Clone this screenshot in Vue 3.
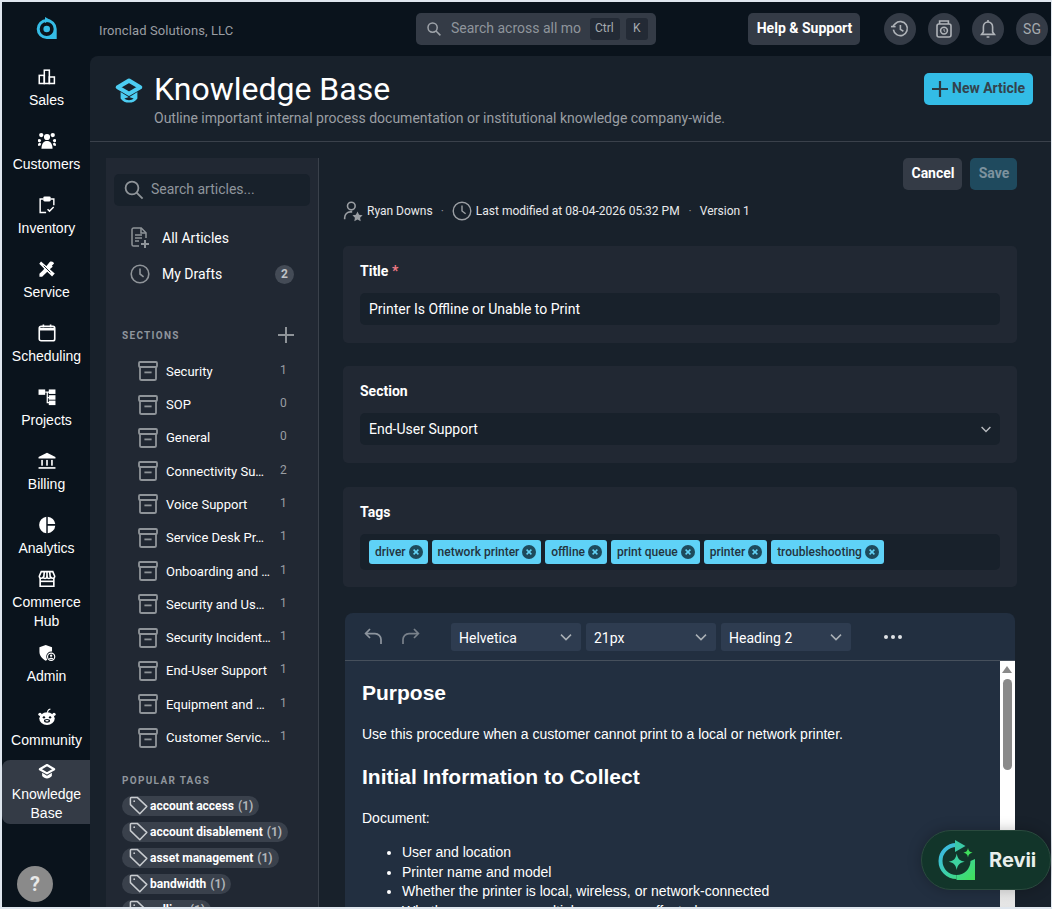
<script setup>
const nav = [
  { label: ['Sales'], icon: 'sales' },
  { label: ['Customers'], icon: 'customers' },
  { label: ['Inventory'], icon: 'inventory' },
  { label: ['Service'], icon: 'service' },
  { label: ['Scheduling'], icon: 'scheduling' },
  { label: ['Projects'], icon: 'projects' },
  { label: ['Billing'], icon: 'billing' },
  { label: ['Analytics'], icon: 'analytics' },
  { label: ['Commerce', 'Hub'], icon: 'commerce' },
  { label: ['Admin'], icon: 'admin' },
  { label: ['Community'], icon: 'community' },
  { label: ['Knowledge', 'Base'], icon: 'kb', active: true },
]
const sections = [
  ['Security', 1], ['SOP', 0], ['General', 0], ['Connectivity Su…', 2], ['Voice Support', 1],
  ['Service Desk Pr…', 1], ['Onboarding and …', 1], ['Security and Us…', 1],
  ['Security Incident…', 1], ['End-User Support', 1], ['Equipment and …', 1], ['Customer Servic…', 1],
]
const popular = [
  ['account access', 1], ['account disablement', 1], ['asset management', 1], ['bandwidth', 1], ['calling', 1],
]
const tags = ['driver', 'network printer', 'offline', 'print queue', 'printer', 'troubleshooting']
</script>

<template>
  <div class="frame">
    <aside class="rail">
      <div class="logo">
        <svg width="24" height="24" viewBox="0 0 24 24">
          <path fill-rule="evenodd" d="M12.7 2a10 10 0 1 0 0 20h10V12A10 10 0 0 0 12.7 2ZM12.7 5a7 7 0 1 1 0 14 7 7 0 0 1 0-14Z" fill="#35bce6"/>
          <circle cx="12.7" cy="12" r="3.3" fill="#35bce6"/>
          <path d="M11 0 16.4 3 11 6Z" fill="#35bce6"/>
        </svg>
      </div>
      <nav class="nav">
        <div v-for="n in nav" :key="n.icon" class="nav-item" :class="{ active: n.active }">
          <svg class="nav-icon" width="18" height="18" viewBox="0 0 20 20">
            <g v-if="n.icon === 'sales'" fill="none" stroke="#fff" stroke-width="1.7">
              <rect x="1.4" y="8.2" width="5.6" height="9"/><rect x="7" y="2.4" width="5.6" height="14.8"/><rect x="12.6" y="10" width="5.6" height="7.2"/>
            </g>
            <g v-else-if="n.icon === 'customers'" fill="#fff" transform="translate(10 10) scale(1.14) translate(-10 -10.4)">
              <circle cx="10" cy="6.5" r="3"/><circle cx="4.4" cy="4.6" r="2.1"/><circle cx="15.6" cy="4.6" r="2.1"/>
              <circle cx="2.6" cy="10" r="1.6"/><circle cx="17.4" cy="10" r="1.6"/>
              <path d="M4.6 18c0-5 2.2-7.6 5.4-7.6s5.4 2.6 5.4 7.6Z"/><path d="M1 15c0-1.6.8-3 2-3l1.4 1-1 2Z"/><path d="M19 15c0-1.6-.8-3-2-3l-1.4 1 1 2Z"/>
            </g>
            <g v-else-if="n.icon === 'inventory'" fill="none" stroke="#fff" stroke-width="1.6">
              <path d="M6 3.4H2.4v15H9M14 3.4h3.6v7"/><rect x="6.6" y="1.4" width="6.8" height="3.8" rx=".8" fill="#fff"/><path d="M10.6 14.6l2.2 2.2 4.6-4.6"/>
            </g>
            <g v-else-if="n.icon === 'service'" fill="#fff">
              <path d="M3.4 1.6 18.6 15l-3 3.4L1.4 4.2Z"/><path d="M13 2.2c2-1.2 4.4 0 4.8 1.8l-2.4 2.4 1 1-2.4 2-5.4 5.4L4.6 18.6H1.6v-3.2l4-4z"/>
              <path d="M6.2 6.2l7.6 7.6" stroke="#0a131c" stroke-width="1"/>
            </g>
            <g v-else-if="n.icon === 'scheduling'" fill="none" stroke="#fff" stroke-width="1.8">
              <rect x="1.4" y="2.6" width="17.2" height="16" rx="2"/><path d="M1.4 5.8h17.2" stroke-width="2.8"/><path d="M6 .6v3M14 .6v3"/>
            </g>
            <g v-else-if="n.icon === 'projects'" fill="#fff">
              <rect x="0.6" y="1.6" width="7.4" height="6"/><rect x="12" y="1.6" width="7.4" height="5"/><rect x="12" y="8" width="7.4" height="5"/><rect x="12" y="14" width="7.4" height="5"/>
              <path d="M8 4h5v1.4H8ZM9.6 4h1.4v12.8H9.6ZM9.6 10h3v1.4h-3ZM9.6 15.6h3v1.4h-3Z"/>
            </g>
            <g v-else-if="n.icon === 'billing'" fill="#fff">
              <path d="M10 .8 19.4 5.6V7.2H.6V5.6Z"/><rect x="3.6" y="8.8" width="1.8" height="6.4"/><rect x="9.1" y="8.8" width="1.8" height="6.4"/><rect x="14.6" y="8.8" width="1.8" height="6.4"/><rect x=".6" y="16.8" width="18.8" height="1.8"/>
            </g>
            <g v-else-if="n.icon === 'analytics'" fill="#fff">
              <path d="M9.2 .8a9.3 9.3 0 0 0 0 18.4Z"/><path d="M10.8 .8a9.3 9.3 0 0 1 8.4 8.2h-8.4Z"/><path d="M10.8 10.8h8.4a9.3 9.3 0 0 1-8.4 8.4Z"/>
            </g>
            <g v-else-if="n.icon === 'commerce'" fill="none" stroke="#fff" stroke-width="1.8">
              <path d="M2.4 9v9h15.2V9"/><path d="M3.6 1.8h12.8L18.6 7c0 2.4-2.8 3-4.3 1-1 2-3.4 2-4.3 0-1 2-3.4 2-4.3 0-1.5 2-4.3 1.4-4.3-1Z"/><path d="M7 2 6.4 8M10 2V8M13 2l.6 6"/><path d="M2.4 12.6h15.2"/>
            </g>
            <g v-else-if="n.icon === 'admin'" fill="#fff">
              <path d="M8.6 1 15.6 3.6v4.8a5.6 5.6 0 0 0-6 7.6l.8 1.6-1.8 1C4.6 16.4 1.6 13 1.6 8.6V3.6Z"/>
              <circle cx="14.6" cy="14.2" r="4" fill="none" stroke="#fff" stroke-width="1.3"/><circle cx="14.6" cy="13" r="1.3"/><path d="M12.2 16.6c.4-1.6 4.4-1.6 4.8 0Z"/>
            </g>
            <g v-else-if="n.icon === 'community'" fill="#fff">
              <ellipse cx="10" cy="11.8" rx="8.6" ry="7"/><circle cx="2.2" cy="7" r="1.8"/><circle cx="17.8" cy="7" r="1.8"/><path d="M10 5.2c0-2.4 1-4 3.6-4.6l.4 1c-2 .6-2.8 1.6-2.8 3.6Z"/>
              <circle cx="6.6" cy="10.4" r="1.3" fill="#0a131c"/><circle cx="13.4" cy="10.4" r="1.3" fill="#0a131c"/><ellipse cx="10" cy="14.2" rx="3.4" ry="2.1" fill="#0a131c"/><ellipse cx="10" cy="14.2" rx="1.9" ry=".9" fill="#fff"/>
            </g>
            <g v-else>
              <path d="M10 3.4 18 8 10 12.6 2 8Z" fill="none" stroke="#fff" stroke-width="2.4" stroke-linejoin="round"/>
              <path d="M4.6 12v3.6c2.8 3.6 8 3.6 10.8 0V12L10 15.2Z" fill="#fff"/>
            </g>
          </svg>
          <span v-for="l in n.label" :key="l" class="nav-label">{{ l }}</span>
        </div>
      </nav>
      <div class="help-dot">?</div>
    </aside>

    <div class="column">
      <header class="topbar">
        <span class="company">Ironclad Solutions, LLC</span>
        <div class="global-search">
          <svg width="16" height="16" viewBox="0 0 16 16" fill="none" stroke="#9ea3a9" stroke-width="1.5"><circle cx="6.6" cy="6.6" r="4.6"/><path d="M10 10l4.4 4.4"/></svg>
          <span class="gs-text">Search across all mo</span>
          <kbd class="key ctrl">Ctrl</kbd>
          <kbd class="key">K</kbd>
        </div>
        <button class="help-btn">Help &amp; Support</button>
        <div class="circles">
          <span class="circle">
            <svg width="20" height="20" viewBox="0 0 20 20" fill="none" stroke="#b0b4b9" stroke-width="1.6"><path d="M3.4 10.6A7 7 0 1 0 5.4 4.6L3 7"/><path d="M1 7.6h4.6" /><path d="M10.4 6v4.4l3 1.8"/></svg>
          </span>
          <span class="circle">
            <svg width="20" height="20" viewBox="0 0 20 20" fill="none" stroke="#b0b4b9" stroke-width="1.6"><rect x="3" y="5" width="14" height="13" rx="2"/><path d="M5.6 5V2h8.8v3"/><circle cx="10" cy="11.6" r="3.4"/><path d="M10 9.8v2l1.2.8" stroke-width="1"/></svg>
          </span>
          <span class="circle">
            <svg width="20" height="20" viewBox="0 0 20 20" fill="none" stroke="#b0b4b9" stroke-width="1.6"><path d="M10 3c-3 0-4.6 2.4-4.6 5v5L3.6 15.4h12.8L14.6 13V8c0-2.6-1.6-5-4.6-5Z"/><path d="M8.6 18h2.8M10 1v2"/></svg>
          </span>
          <span class="circle initials">SG</span>
        </div>
      </header>

      <main class="panel">
        <div class="page-head">
          <svg class="head-icon" width="30" height="26" viewBox="0 0 30 26">
            <path d="M15 2.6 26.2 9.2 15 15.8 3.8 9.2Z" fill="none" stroke="#4ccdf2" stroke-width="4.2" stroke-linejoin="round"/>
            <path d="M6.6 14v6.4c3.6 5.6 13.2 5.6 16.8 0V14L15 19.2Z" fill="#4ccdf2"/>
            <path d="M10.4 20.6c2.4 2.2 6.8 2.2 9.2 0l-4.6-1.6Z" fill="#18212b"/>
          </svg>
          <div class="head-text">
            <h1>Knowledge Base</h1>
            <p>Outline important internal process documentation or institutional knowledge company-wide.</p>
          </div>
          <button class="new-btn">
            <svg width="18" height="18" viewBox="0 0 18 18" stroke="#2b3a42" stroke-width="2.2"><path d="M9 1v16M1 9h16"/></svg>
            <span>New Article</span>
          </button>
        </div>

        <div class="body">
          <section class="side">
            <div class="side-search">
              <svg width="22" height="22" viewBox="0 0 22 22" fill="none" stroke="#8f9499" stroke-width="1.8"><circle cx="9" cy="9" r="6.4"/><path d="M13.6 13.6l6 6"/></svg>
              <span>Search articles...</span>
            </div>
            <div class="side-link">
              <svg width="20" height="22" viewBox="0 0 20 22" fill="none" stroke="#8f9499" stroke-width="1.5"><path d="M9 19H3.6A1.6 1.6 0 0 1 2 17.4V2.6A1.6 1.6 0 0 1 3.6 1h7.6L16 5.8V11"/><path d="M11 1v5h5"/><path d="M5 8h7M5 11h7M5 14h4"/><path d="M15 13v8M11 17h8" stroke-width="2"/></svg>
              <span class="sl-text">All Articles</span>
            </div>
            <div class="side-link">
              <svg width="20" height="20" viewBox="0 0 20 20" fill="none" stroke="#8f9499" stroke-width="1.6"><circle cx="10" cy="10" r="8.8"/><path d="M10 4.6V10l3.6 2.8"/></svg>
              <span class="sl-text">My Drafts</span>
              <span class="badge">2</span>
            </div>
            <div class="sec-head">
              <span>SECTIONS</span>
              <svg width="18" height="18" viewBox="0 0 18 18" stroke="#8f9499" stroke-width="2"><path d="M9 1v16M1 9h16"/></svg>
            </div>
            <ul class="sections">
              <li v-for="s in sections" :key="s[0]">
                <svg width="20" height="20" viewBox="0 0 20 20" fill="none" stroke="#8f9499" stroke-width="1.8"><rect x="1" y="1" width="18" height="5" rx="1"/><path d="M2 6v11.4A1.6 1.6 0 0 0 3.6 19h12.8a1.6 1.6 0 0 0 1.6-1.6V6"/><path d="M6.4 11.4h7.2"/></svg>
                <span class="sec-name">{{ s[0] }}</span>
                <span class="sec-count">{{ s[1] }}</span>
              </li>
            </ul>
            <div class="pop-head">POPULAR TAGS</div>
            <div class="pops">
              <span v-for="p in popular" :key="p[0]" class="pop">
                <svg width="19" height="19" viewBox="0 0 19 19" fill="none" stroke="#c8cbcf" stroke-width="1.5"><path d="M1.4 2.4a1 1 0 0 1 1-1h5.8l9.6 9-7 7.4L1.4 8.6Z" stroke-linejoin="round"/><circle cx="5.2" cy="5.2" r=".9" fill="#c8cbcf" stroke="none"/></svg>
                <b>{{ p[0] }}</b><em>({{ p[1] }})</em>
              </span>
            </div>
          </section>

          <section class="form">
            <div class="actions">
              <button class="btn-cancel">Cancel</button>
              <button class="btn-save">Save</button>
            </div>
            <div class="meta">
              <svg class="m-user" width="20" height="22" viewBox="0 0 24 26" fill="none" stroke="#9a9ea3" stroke-width="1.9"><circle cx="10" cy="7" r="4.6"/><path d="M2 23v-2a7 7 0 0 1 7-7h2"/><path d="M17.4 13.6l1.9 3.8 4.2.6-3 3 .7 4.2-3.8-2-3.8 2 .7-4.2-3-3 4.2-.6Z" fill="#9a9ea3" stroke="none"/></svg>
              <span>Ryan Downs</span>
              <i>·</i>
              <svg class="m-clock" width="20" height="20" viewBox="0 0 20 20" fill="none" stroke="#9a9ea3" stroke-width="1.4"><circle cx="10" cy="10" r="8.8"/><path d="M10 4.6V10l3.6 2.8"/></svg>
              <span>Last modified at 08-04-2026 05:32 PM</span>
              <i>·</i>
              <span>Version 1</span>
            </div>
            <div class="card">
              <label>Title <span class="req">*</span></label>
              <div class="field">Printer Is Offline or Unable to Print</div>
            </div>
            <div class="card">
              <label>Section</label>
              <div class="field select">
                End-User Support
                <svg width="12" height="12" viewBox="0 0 12 12" fill="none" stroke="#b8bbbf" stroke-width="1.4"><path d="M1.6 4l4.4 4.4L10.4 4"/></svg>
              </div>
            </div>
            <div class="card tags-card">
              <label>Tags</label>
              <div class="field tags">
                <span v-for="t in tags" :key="t" class="tag">
                  {{ t }}
                  <svg width="14" height="14" viewBox="0 0 14 14"><circle cx="7" cy="7" r="7" fill="#1e4a5c"/><path d="M4.6 4.6l4.8 4.8M9.4 4.6l-4.8 4.8" stroke="#63d3f6" stroke-width="1.5"/></svg>
                </span>
              </div>
            </div>
            <div class="editor">
              <div class="toolbar">
                <svg class="undo" width="22" height="22" viewBox="0 0 22 22" fill="none" stroke="#8d959e" stroke-width="1.7"><path d="M7 3 2.6 7.6 7 12"/><path d="M3 7.6h9a6 6 0 0 1 6 6V18"/></svg>
                <svg class="redo" width="22" height="22" viewBox="0 0 22 22" fill="none" stroke="#79818a" stroke-width="1.7"><path d="M15 3l4.4 4.6L15 12"/><path d="M19 7.6h-9a6 6 0 0 0-6 6V18"/></svg>
                <div class="tb-select first">Helvetica<svg width="14" height="14" viewBox="0 0 14 14" fill="none" stroke="#aab0b6" stroke-width="1.5"><path d="M2 4.6l5 5 5-5"/></svg></div>
                <div class="tb-select">21px<svg width="14" height="14" viewBox="0 0 14 14" fill="none" stroke="#aab0b6" stroke-width="1.5"><path d="M2 4.6l5 5 5-5"/></svg></div>
                <div class="tb-select">Heading 2<svg width="14" height="14" viewBox="0 0 14 14" fill="none" stroke="#aab0b6" stroke-width="1.5"><path d="M2 4.6l5 5 5-5"/></svg></div>
                <div class="dots"><i></i><i></i><i></i></div>
              </div>
              <div class="ed-wrap">
                <div class="ed-body">
                  <h2>Purpose</h2>
                  <p class="intro">Use this procedure when a customer cannot print to a local or network printer.</p>
                  <h2>Initial Information to Collect</h2>
                  <p class="lead">Document:</p>
                  <ul>
                    <li>User and location</li>
                    <li>Printer name and model</li>
                    <li>Whether the printer is local, wireless, or network-connected</li>
                    <li>Whether one user or multiple users are affected</li>
                  </ul>
                </div>
                <div class="scrollbar">
                  <span class="arrow"></span>
                  <span class="thumb"></span>
                </div>
              </div>
            </div>
          </section>
        </div>
      </main>
    </div>

    <div class="revii">
      <svg width="40" height="42" viewBox="0 0 40 42">
        <defs>
          <linearGradient id="rg" gradientUnits="userSpaceOnUse" x1="3" y1="8" x2="36" y2="40"><stop offset="0" stop-color="#3cb6ea"/><stop offset=".55" stop-color="#3dd3a0"/><stop offset="1" stop-color="#40e05c"/></linearGradient>
        </defs>
        <path d="M19.5 6A16 16 0 1 0 19.5 38" fill="none" stroke="url(#rg)" stroke-width="4"/>
        <path d="M38 20V41H19.5V36A14 14 0 0 0 33.5 22Z" fill="url(#rg)"/>
        <path d="M18 1 28.5 7 18 13Z" fill="#3bc9a6"/>
        <path d="M19.7 14.4c.9 5 2.6 7.3 8 8.3-5.4 1-7.1 3.3-8 8.3-.9-5-2.6-7.3-8-8.3 5.4-1 7.1-3.3 8-8.3Z" fill="#3dd3a0"/>
        <path d="M31 9c.5 2.9 1.5 4.1 4.6 4.7-3.1.6-4.1 1.8-4.6 4.7-.5-2.9-1.5-4.1-4.6-4.7 3.1-.6 4.1-1.8 4.6-4.7Z" fill="#40e05c"/>
      </svg>
      <span>Revii</span>
    </div>
  </div>
</template>

<style>
html, body { margin: 0; background: #dfe6ee; overflow: hidden; }
</style>

<style scoped>
* { box-sizing: border-box; }
.frame {
  position: relative;
  display: flex;
  width: 1052px;
  height: 909px;
  padding: 2px 1px 2px 2px;
  font-family: Roboto, sans-serif;
  color: #fff;
  overflow: hidden;
}
.rail {
  position: relative;
  width: 88px;
  flex: none;
  background: #0a131c;
  display: flex;
  flex-direction: column;
}
.logo { height: 54px; flex: none; display: flex; align-items: center; justify-content: center; }
.nav { display: flex; flex-direction: column; }
.nav-item {
  height: 64px;
  display: flex;
  flex-direction: column;
  align-items: center;
  justify-content: center;
  font-family: "Liberation Sans", Arial, sans-serif;
  font-size: 14px;
  line-height: 19px;
  border-radius: 8px 0 0 8px;
  padding-left: 1px;
}
.nav-item.active { background: #343b46; }
.nav-icon { margin: 1px 0 5px; flex: none; }
.nav-label { display: block; }
.help-dot {
  position: absolute;
  left: 15px;
  bottom: 5px;
  width: 36px;
  height: 36px;
  border-radius: 50%;
  background: #8a8a8a;
  display: flex;
  align-items: center;
  justify-content: center;
  font-weight: 700;
  font-size: 20px;
  color: #e8e8e8;
}
.column { flex: 1; min-width: 0; display: flex; flex-direction: column; background: #0a131c; overflow: hidden; }
.topbar { height: 54px; flex: none; display: flex; align-items: center; padding: 0 0 0 9px; }
.company { font-size: 13px; color: #9a9ea3; width: 317px; letter-spacing: .1px; padding-top: 3px; }
.global-search {
  width: 240px;
  height: 32px;
  border-radius: 5px;
  background: #343b46;
  display: flex;
  align-items: center;
  padding: 0 6px 0 10px;
  color: #8f959c;
  font-size: 14px;
}
.gs-text { margin: 0 0 2px 9px; width: 130px; white-space: nowrap; overflow: hidden; }
.key {
  font-family: Roboto, sans-serif;
  font-size: 12px;
  background: #232a35;
  color: #a6abb0;
  height: 22px;
  line-height: 20px;
  padding: 0 7px;
  border-radius: 3px;
  margin-left: 6px;
}
.key.ctrl { margin-left: 9px; width: 30px; padding: 0 5px; }
.help-btn {
  margin-left: 92px;
  width: 112px;
  height: 32px;
  border: 0;
  border-radius: 5px;
  background: #343b46;
  color: #fff;
  font: 700 14px Roboto, sans-serif;
  padding: 0 0 3px 1px;
}
.circles { display: flex; gap: 12px; margin-left: 24px; }
.circle {
  width: 32px;
  height: 32px;
  border-radius: 50%;
  background: #343b46;
  display: flex;
  align-items: center;
  justify-content: center;
}
.initials { font-size: 14px; color: #a5a9ae; }
.panel {
  flex: 1;
  min-height: 0;
  background: #18212b;
  border-radius: 8px 0 0 0;
  display: flex;
  flex-direction: column;
  overflow: hidden;
}
.page-head {
  height: 86px;
  flex: none;
  border-bottom: 1px solid #3a414b;
  display: flex;
  padding: 17px 18px 0 24px;
  position: relative;
}
.head-icon { margin-top: 5px; }
.head-text { margin-left: 10px; flex: 1; }
h1 { margin: 0; font-weight: 400; font-size: 32px; line-height: 32px; color: #fff; }
.head-text p { margin: 5px 0 0; font-size: 14px; line-height: 17px; color: #9a9ea3; }
.new-btn {
  width: 109px;
  height: 32px;
  border: 0;
  border-radius: 5px;
  background: #33bce6;
  color: #33434d;
  font: 700 14px Roboto, sans-serif;
  display: flex;
  align-items: center;
  padding: 0 0 0 7px;
  gap: 3px;
}
.new-btn span { margin-bottom: 2px; }
.body { flex: 1; min-height: 0; display: flex; padding: 16px 0 0 16px; }
.side {
  width: 213px;
  flex: none;
  background: #212833;
  border-right: 1px solid #3a414b;
  padding: 16px 8px 0 8px;
  overflow: hidden;
}
.side-search {
  height: 32px;
  border-radius: 5px;
  background: #18212b;
  display: flex;
  align-items: center;
  padding-left: 9px;
  font-size: 14px;
  color: #8f959c;
  gap: 6px;
}
.side-search span { margin-bottom: 2px; }
.side-link {
  height: 36px;
  display: flex;
  align-items: center;
  padding-left: 16px;
  font-size: 14px;
  font-weight: 400;
}
.side-search + .side-link { margin-top: 14px; }
.sl-text { margin-left: 12px; flex: 1; }
.badge {
  width: 19px;
  height: 19px;
  border-radius: 50%;
  background: #444b56;
  color: #c0c3c7;
  font-size: 12px;
  display: flex;
  align-items: center;
  justify-content: center;
  margin-right: 16px;
  font-weight: 700;
}
.sec-head {
  display: flex;
  justify-content: space-between;
  align-items: center;
  margin-top: 32px;
  height: 22px;
  padding: 0 15px 0 8px;
  font-size: 10px;
  font-weight: 700;
  letter-spacing: 1.3px;
  color: #8f959c;
}
.sections { list-style: none; margin: 8.6px 0 0; padding: 0; }
.sections li {
  height: 33.3px;
  display: flex;
  align-items: center;
  padding-left: 24px;
  font-size: 13px;
}
.sec-name { margin-left: 8px; width: 106px; white-space: nowrap; }
.sec-count { margin-left: 8px; font-size: 12px; color: #9a9ea3; margin-top: -3px; }
.pop-head {
  margin: 20.4px 0 0 8px;
  font-size: 10px;
  font-weight: 700;
  letter-spacing: 1.3px;
  color: #8f959c;
}
.pops { display: flex; flex-direction: column; align-items: flex-start; gap: 6px; margin: 10px 0 0 8px; }
.pop {
  height: 20px;
  border-radius: 10px;
  background: #3a414c;
  display: flex;
  align-items: center;
  padding: 0 6px 0 7px;
  font-size: 12px;
}
.pop b { font-weight: 700; margin-left: 2px; }
.pop em { font-style: normal; font-weight: 700; color: #b0b4b9; margin-left: 4px; }
.form { flex: 1; min-width: 0; padding: 0 34px 0 24px; }
.actions { display: flex; justify-content: flex-end; gap: 8px; height: 32px; }
.actions button { height: 32px; border: 0; border-radius: 5px; font: 700 14px Roboto, sans-serif; padding: 0 0 2px 1px; }
.btn-cancel { width: 59px; background: #343b46; color: #fff; }
.btn-save { width: 47px; background: #1f4a5e; color: #7d929e; }
.meta {
  display: flex;
  align-items: center;
  height: 24px;
  margin-top: 9px;
  font-size: 12px;
  color: #e8eaec;
}
.meta span { white-space: nowrap; }
.m-user { margin-right: 4px; }
.m-clock { margin-right: 4px; }
.meta i { font-style: normal; color: #8d9197; margin: 0 8px; }
.meta i:nth-of-type(2) { margin-left: 9px; }
.card {
  background: #212833;
  border-radius: 5px;
  padding: 16px 17px 0;
  height: 97px;
  margin-top: 23px;
}
.tags-card { height: 100px; margin-top: 24px; }
.card label { display: block; font-size: 14px; font-weight: 700; line-height: 18px; }
.req { color: #f07a84; }
.field {
  margin-top: 13px;
  height: 32px;
  border-radius: 5px;
  background: #18212b;
  display: flex;
  align-items: center;
  padding: 0 9px;
  font-size: 14px;
}
.select { justify-content: space-between; padding-right: 8px; }
.tags { height: 36px; gap: 4px; padding: 0 9px; }
.tag {
  height: 24px;
  border-radius: 3px;
  background: #5fd2f7;
  color: #23343e;
  font-size: 12px;
  font-weight: 500;
  display: flex;
  align-items: center;
  gap: 3px;
  padding: 0 5px 0 6px;
  white-space: nowrap;
}
.editor {
  margin: 26px 2px 0;
  border-radius: 8px 8px 0 0;
  background: #222f40;
  height: 330px;
}
.toolbar {
  height: 48px;
  border-bottom: 1px solid #46505c;
  display: flex;
  align-items: center;
  padding: 0 0 0 18px;
}
.redo { margin-left: 14px; }
.tb-select {
  width: 130px;
  height: 28px;
  border-radius: 3px;
  background: #2e3c50;
  margin-left: 5px;
  padding: 2px 8px 0;
  display: flex;
  align-items: center;
  justify-content: space-between;
  font-size: 14px;
}
.tb-select svg { margin-bottom: 2px; }
.tb-select.first { margin-left: 30px; }
.dots { display: flex; gap: 3px; margin-left: 33px; }
.dots i { width: 4px; height: 4px; border-radius: 50%; background: #dfe2e5; }
.ed-wrap { display: flex; height: 282px; background: #222f40; }
.ed-body {
  flex: 1;
  padding: 19px 17px 0;
  font-family: "Liberation Sans", Arial, sans-serif;
  font-size: 14px;
  line-height: 19.6px;
}
.ed-body h2 { font-size: 21px; font-weight: 700; line-height: 25px; margin: 0; }
.intro { margin: 20px 0 19px; }
.lead { margin: 20px 0 15px; }
.ed-body ul { margin: 0; padding-left: 40px; }
.scrollbar {
  width: 15px;
  background: linear-gradient(#fff 60%, #d8d8d8);
  position: relative;
  flex: none;
}
.arrow {
  position: absolute;
  left: 2px;
  top: 5px;
  border: 5.5px solid transparent;
  border-top: 0;
  border-bottom: 7px solid #8a8a8a;
}
.thumb {
  position: absolute;
  left: 3px;
  top: 18px;
  width: 9px;
  height: 91px;
  border-radius: 5px;
  background: #8a8a8a;
}
.revii {
  position: absolute;
  left: 921px;
  top: 830px;
  width: 130px;
  height: 60px;
  border-radius: 30px;
  background: #12352a;
  border: 1px solid #2a4a3e;
  display: flex;
  align-items: center;
  padding-left: 15px;
  gap: 12px;
  font: 700 20px Inter, Roboto, sans-serif;
  color: #e8efec;
  box-shadow: 0 0 14px rgba(0,0,0,.25);
}
</style>
